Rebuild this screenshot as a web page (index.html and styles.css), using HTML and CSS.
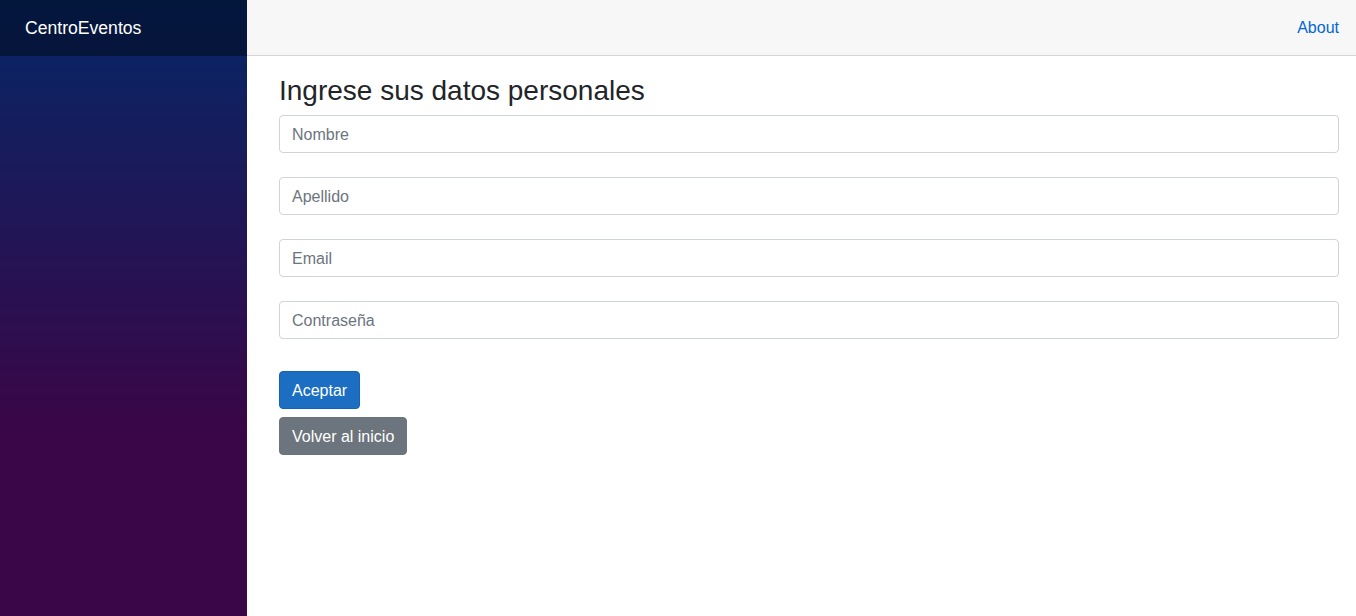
FILE: index.html
```html
<!DOCTYPE html>
<html lang="es">
<head>
<meta charset="utf-8">
<title>CentroEventos</title>
<link rel="stylesheet" href="styles.css">
</head>
<body>
<div class="page">
  <aside class="sidebar">
    <div class="brand-row">
      <a class="brand" href="#">CentroEventos</a>
    </div>
  </aside>
  <main class="main">
    <div class="top-row">
      <a class="about" href="#">About</a>
    </div>
    <article class="content">
      <h3 class="title">Ingrese sus datos personales</h3>
      <form class="form">
        <input class="field" type="text" placeholder="Nombre">
        <input class="field" type="text" placeholder="Apellido">
        <input class="field" type="email" placeholder="Email">
        <input class="field" type="password" placeholder="Contraseña">
        <div class="actions">
          <button class="btn btn-primary" type="button">Aceptar</button>
          <button class="btn btn-secondary" type="button">Volver al inicio</button>
        </div>
      </form>
    </article>
  </main>
</div>
</body>
</html>
```
FILE: styles.css
```css
* { box-sizing: border-box; }
html, body { margin: 0; height: 100%; }
body {
  font-family: "Liberation Sans", Arial, sans-serif;
  font-size: 16px;
  line-height: 1.5;
  color: #212529;
  background: #fff;
}
.page {
  display: flex;
  height: 616px;
}
.sidebar {
  width: 247px;
  flex: none;
  background-image: linear-gradient(180deg, rgb(5, 39, 103) 0%, #3a0647 70%);
}
.brand-row {
  height: 56px;
  background-color: rgba(0, 0, 0, 0.4);
  display: flex;
  align-items: center;
  padding-left: 25px;
}
.brand {
  color: #fff;
  text-decoration: none;
  font-size: 17.6px;
  line-height: 1.5;
}
.main {
  flex: 1;
  display: flex;
  flex-direction: column;
}
.top-row {
  height: 56px;
  background-color: #f7f7f7;
  border-bottom: 1px solid #d6d5d5;
  display: flex;
  align-items: center;
  justify-content: flex-end;
  padding-right: 17px;
}
.about {
  color: #0366d6;
  text-decoration: none;
  font-size: 16px;
}
.content {
  padding: 18px 17px 0 32px;
}
.title {
  margin: 0 0 7px;
  font-size: 28px;
  font-weight: 500;
  line-height: 1.2;
}
.form {
  display: flex;
  flex-direction: column;
}
.field {
  display: block;
  width: 100%;
  height: 38px;
  padding: 7px 12px 5px;
  font-family: inherit;
  font-size: 16px;
  line-height: 1.5;
  color: #495057;
  background: #fff;
  border: 1px solid #ced4da;
  border-radius: 4px;
  margin-bottom: 24px;
}
.field::placeholder { color: #6c757d; opacity: 1; }
.actions {
  margin-top: 8px;
  display: flex;
  flex-direction: column;
  align-items: flex-start;
  gap: 8px;
}
.btn {
  font-family: inherit;
  font-size: 16px;
  line-height: 1.5;
  padding: 7px 12px 5px;
  border-radius: 4px;
  border: 1px solid transparent;
  color: #fff;
  cursor: pointer;
}
.btn-primary {
  background-color: #1b6ec2;
  border-color: #1861ac;
}
.btn-secondary {
  background-color: #6c757d;
  border-color: #6c757d;
}
```
